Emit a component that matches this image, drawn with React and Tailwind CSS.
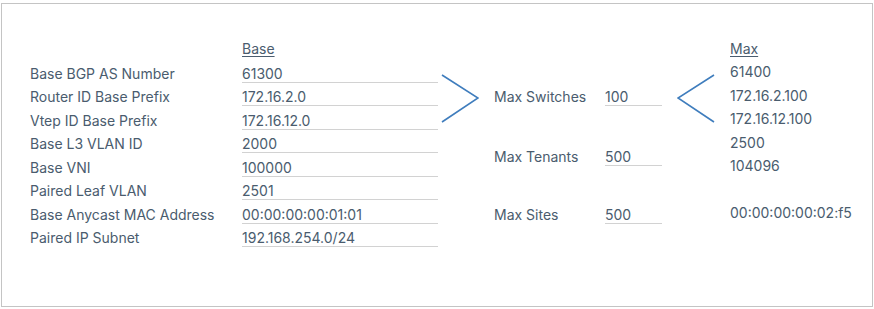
import React from "react";

// Base values on the left, derived max values on the right
const baseRows = [
  { label: "Base BGP AS Number", value: "61300" },
  { label: "Router ID Base Prefix", value: "172.16.2.0" },
  { label: "Vtep ID Base Prefix", value: "172.16.12.0" },
  { label: "Base L3 VLAN ID", value: "2000" },
  { label: "Base VNI", value: "100000" },
  { label: "Paired Leaf VLAN", value: "2501" },
  { label: "Base Anycast MAC Address", value: "00:00:00:00:01:01" },
  { label: "Paired IP Subnet", value: "192.168.254.0/24" },
];

const maxRows = ["61400", "172.16.2.100", "172.16.12.100", "2500", "104096", "", "00:00:00:00:02:f5"];

const Chevron = ({ points }) => (
  <svg width="38" height="50" viewBox="0 0 38 50" fill="none">
    <polyline points={points} stroke="#3f7dbd" strokeWidth="1.6" strokeLinejoin="miter" />
  </svg>
);

const MaxField = ({ label, value }) => (
  <div className="flex h-[23.5px]">
    <div className="w-[111px] leading-[17px]">{label}</div>
    <div className="w-[57px] h-[18px] leading-[17px] border-b border-[#d2d2d2]">{value}</div>
  </div>
);

export default function App() {
  return (
    <div
      className="mt-[3px] ml-[1px] w-[872px] h-[304px] border border-[#c4c4c4] bg-white text-[14px] text-[#4a5c6e]"
      style={{ fontFamily: "Inter, 'Noto Sans', sans-serif" }}
    >
      <div className="flex pl-[28px] pt-[35.5px]">
        {/* Base table */}
        <div className="grid grid-cols-[212px_196px]">
          <div className="h-[25px]" />
          <div className="h-[25px] leading-[17px]">
            <span className="underline underline-offset-2">Base</span>
          </div>
          {baseRows.map((row) => (
            <React.Fragment key={row.label}>
              <div className="h-[23.5px] leading-[17px]">{row.label}</div>
              <div className="h-[23.5px]">
                <div className="h-[18px] leading-[17px] border-b border-[#d2d2d2]">{row.value}</div>
              </div>
            </React.Fragment>
          ))}
        </div>

        <div className="ml-[3px] mt-[33.5px]">
          <Chevron points="1,2 37,25 1,49" />
        </div>

        {/* Max inputs */}
        <div className="ml-[15px] pt-[48.5px]">
          <MaxField label="Max Switches" value="100" />
          <div className="mt-[36px]">
            <MaxField label="Max Tenants" value="500" />
          </div>
          <div className="mt-[34.5px]">
            <MaxField label="Max Sites" value="500" />
          </div>
        </div>

        <div className="ml-[15px] mt-[33.5px]">
          <Chevron points="37,2 1,25 37,49" />
        </div>

        {/* Max column */}
        <div className="ml-[15px]">
          <div className="h-[23.5px] leading-[17px]">
            <span className="underline underline-offset-2">Max</span>
          </div>
          {maxRows.map((v, i) => (
            <div key={i} className="h-[23.5px] leading-[17px]">
              {v}
            </div>
          ))}
        </div>
      </div>
    </div>
  );
}
